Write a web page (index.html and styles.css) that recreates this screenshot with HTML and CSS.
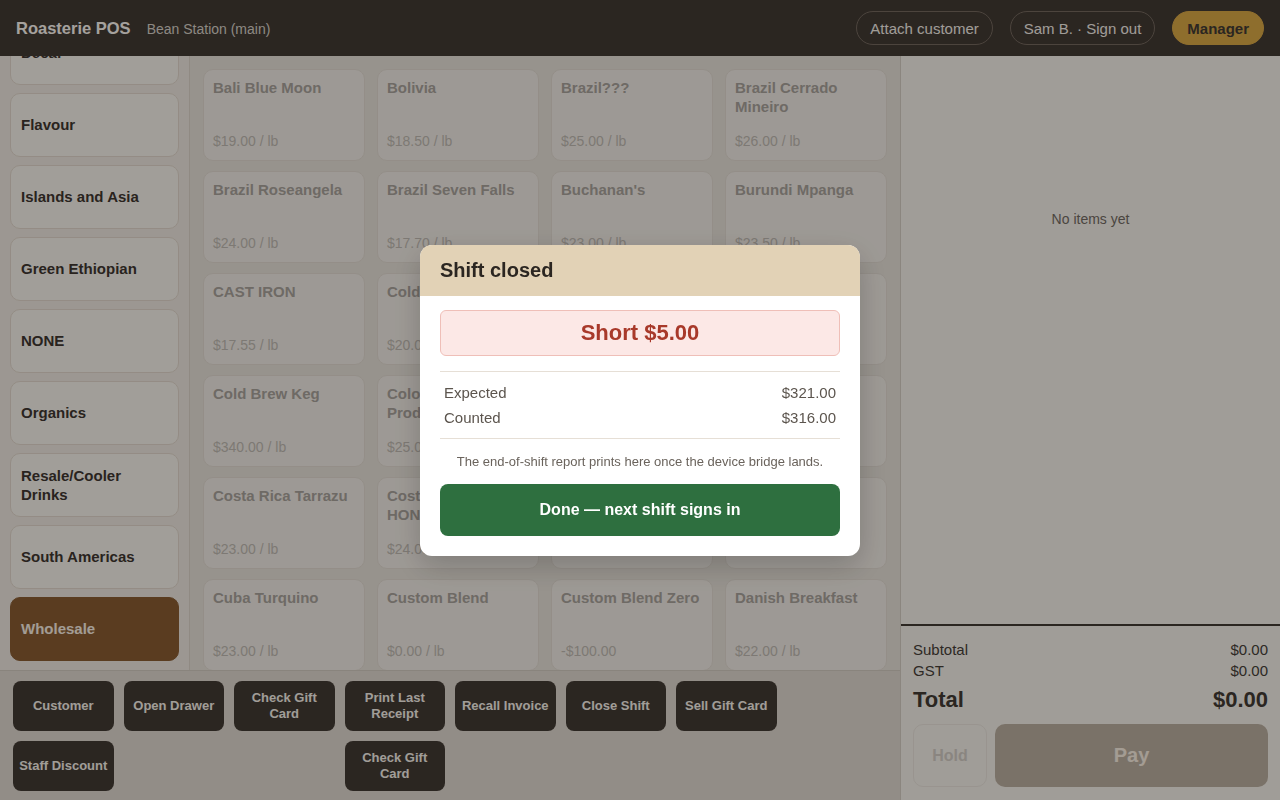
FILE: index.html
```html
<!DOCTYPE html>
<html lang="en">
<head>
    <meta charset="UTF-8">
    <meta name="viewport" content="width=device-width, initial-scale=1.0">
    <title>Roasterie POS - Bean Station</title>
    <link rel="stylesheet" href="styles.css">
</head>
<body>
    <header class="topbar">
        <div class="brand">
            <span class="brand-name">Roasterie POS</span>
            <span class="brand-station">Bean Station (main)</span>
        </div>
        <div class="topbar-actions">
            <button class="pill">Attach customer</button>
            <button class="pill">Sam B. · Sign out</button>
            <button class="pill pill-manager">Manager</button>
        </div>
    </header>

    <div class="main">
        <div class="left">
            <div class="browse">
                <nav class="categories" id="categories">
                    <button class="cat">All Coffee</button>
                    <button class="cat">Blends</button>
                    <button class="cat">Decaf</button>
                    <button class="cat">Flavour</button>
                    <button class="cat">Islands and Asia</button>
                    <button class="cat">Green Ethiopian</button>
                    <button class="cat">NONE</button>
                    <button class="cat">Organics</button>
                    <button class="cat">Resale/Cooler Drinks</button>
                    <button class="cat">South Americas</button>
                    <button class="cat cat-active">Wholesale</button>
                </nav>

                <div class="products">
                    <div class="product"><span class="p-name">Bali Blue Moon</span><span class="p-price">$19.00 / lb</span></div>
                    <div class="product"><span class="p-name">Bolivia</span><span class="p-price">$18.50 / lb</span></div>
                    <div class="product"><span class="p-name">Brazil???</span><span class="p-price">$25.00 / lb</span></div>
                    <div class="product"><span class="p-name">Brazil Cerrado Mineiro</span><span class="p-price">$26.00 / lb</span></div>

                    <div class="product"><span class="p-name">Brazil Roseangela</span><span class="p-price">$24.00 / lb</span></div>
                    <div class="product"><span class="p-name">Brazil Seven Falls</span><span class="p-price">$17.70 / lb</span></div>
                    <div class="product"><span class="p-name">Buchanan's</span><span class="p-price">$23.00 / lb</span></div>
                    <div class="product"><span class="p-name">Burundi Mpanga</span><span class="p-price">$23.50 / lb</span></div>

                    <div class="product"><span class="p-name">CAST IRON</span><span class="p-price">$17.55 / lb</span></div>
                    <div class="product"><span class="p-name">Cold Brew Blend</span><span class="p-price">$20.00 / lb</span></div>
                    <div class="product"><span class="p-name">Cold Brew Concentrate</span><span class="p-price">$18.00 / lb</span></div>
                    <div class="product"><span class="p-name">Colombia Huila</span><span class="p-price">$22.50 / lb</span></div>

                    <div class="product"><span class="p-name">Cold Brew Keg</span><span class="p-price">$340.00 / lb</span></div>
                    <div class="product"><span class="p-name">Colombia Women-Produced</span><span class="p-price">$25.00 / lb</span></div>
                    <div class="product"><span class="p-name">Colombia Supremo</span><span class="p-price">$21.00 / lb</span></div>
                    <div class="product"><span class="p-name">Congo Kivu</span><span class="p-price">$24.50 / lb</span></div>

                    <div class="product"><span class="p-name">Costa Rica Tarrazu</span><span class="p-price">$23.00 / lb</span></div>
                    <div class="product"><span class="p-name">Costa Rica Tarrazu HONEY</span><span class="p-price">$24.00 / lb</span></div>
                    <div class="product"><span class="p-name">Cuba Serrano</span><span class="p-price">$26.50 / lb</span></div>
                    <div class="product"><span class="p-name">Cuba Cristalmontana</span><span class="p-price">$27.00 / lb</span></div>

                    <div class="product"><span class="p-name">Cuba Turquino</span><span class="p-price">$23.00 / lb</span></div>
                    <div class="product"><span class="p-name">Custom Blend</span><span class="p-price">$0.00 / lb</span></div>
                    <div class="product"><span class="p-name">Custom Blend Zero</span><span class="p-price">-$100.00</span></div>
                    <div class="product"><span class="p-name">Danish Breakfast</span><span class="p-price">$22.00 / lb</span></div>
                </div>
            </div>

            <div class="toolbar">
                <button class="tool">Customer</button>
                <button class="tool">Open Drawer</button>
                <button class="tool">Check Gift Card</button>
                <button class="tool">Print Last Receipt</button>
                <button class="tool">Recall Invoice</button>
                <button class="tool">Close Shift</button>
                <button class="tool">Sell Gift Card</button>
                <button class="tool">Staff Discount</button>
                <button class="tool tool-col4">Check Gift Card</button>
            </div>
        </div>

        <aside class="cart">
            <div class="cart-items">
                <p class="cart-empty">No items yet</p>
            </div>
            <div class="cart-totals">
                <div class="line"><span>Subtotal</span><span>$0.00</span></div>
                <div class="line"><span>GST</span><span>$0.00</span></div>
                <div class="line line-total"><span>Total</span><span>$0.00</span></div>
                <div class="cart-buttons">
                    <button class="btn-hold" disabled>Hold</button>
                    <button class="btn-pay" disabled>Pay</button>
                </div>
            </div>
        </aside>
    </div>

    <!-- shift closed dialog -->
    <div class="backdrop">
        <div class="dialog">
            <div class="dialog-header">Shift closed</div>
            <div class="dialog-body">
                <div class="variance">Short $5.00</div>
                <div class="summary">
                    <div class="summary-row"><span>Expected</span><span>$321.00</span></div>
                    <div class="summary-row"><span>Counted</span><span>$316.00</span></div>
                </div>
                <p class="dialog-note">The end-of-shift report prints here once the device bridge lands.</p>
                <button class="btn-done">Done — next shift signs in</button>
            </div>
        </div>
    </div>

    <script>
        var cats = document.getElementById("categories");
        cats.scrollTop = cats.scrollHeight;
    </script>
</body>
</html>
```

FILE: styles.css
```css
* {
    box-sizing: border-box;
}

body {
    margin: 0;
    padding: 0;
    font-family: "Liberation Sans", Arial, sans-serif;
    background-color: #f6f2ea;
    color: #2b2621;
    height: 800px;
    overflow: hidden;
}

button {
    font-family: inherit;
    cursor: pointer;
}

/* top bar */
.topbar {
    height: 56px;
    background-color: #433b34;
    display: flex;
    align-items: center;
    justify-content: space-between;
    padding: 0 16px;
}

.brand {
    display: flex;
    align-items: baseline;
    gap: 16px;
}

.brand-name {
    color: #fdf8f2;
    font-weight: bold;
    font-size: 16.5px;
}

.brand-station {
    color: #d9d2c9;
    font-size: 14px;
}

.topbar-actions {
    display: flex;
    gap: 17px;
}

.pill {
    height: 34px;
    padding: 0 13px;
    border: 1px solid #75695e;
    border-radius: 17px;
    background: transparent;
    color: #f6f0e9;
    font-size: 15px;
}

.pill-manager {
    padding: 0 14px;
    background-color: #dba946;
    border-color: #dba946;
    color: #433b34;
    font-weight: bold;
}

/* main layout */
.main {
    display: flex;
    height: 744px;
}

.left {
    width: 900px;
    display: flex;
    flex-direction: column;
}

.browse {
    flex: 1;
    display: flex;
    min-height: 0;
}

.categories {
    width: 190px;
    flex-shrink: 0;
    background-color: #f0e9e1;
    border-right: 1px solid #ddd4ca;
    padding: 10px 10px 9px;
    display: flex;
    flex-direction: column;
    gap: 8px;
    overflow-y: auto;
    scrollbar-width: none;
}

.cat {
    flex-shrink: 0;
    height: 64px;
    text-align: left;
    padding: 0 10px 1px;
    background-color: #f7f3ec;
    border: 1px solid #e4d8cc;
    border-radius: 10px;
    color: #3f3730;
    font-size: 15px;
    font-weight: bold;
    line-height: 19px;
}

.cat-active {
    background-color: #8b5d32;
    border-color: #8b5d32;
    color: #faf0e4;
}

.products {
    flex: 1;
    background-color: #e8e2d9;
    padding: 13px 13px;
    display: grid;
    grid-template-columns: repeat(4, 162px);
    grid-auto-rows: 92px;
    column-gap: 12px;
    row-gap: 10px;
    overflow: hidden;
}

.product {
    background-color: #f2ece5;
    border: 1px solid #e3dbd2;
    border-radius: 10px;
    padding: 8px 9px 11px;
    display: flex;
    flex-direction: column;
    justify-content: space-between;
}

.p-name {
    color: #aaa39c;
    font-weight: bold;
    font-size: 15px;
    line-height: 19px;
}

.p-price {
    color: #c1bab2;
    font-size: 14px;
}

/* action toolbar */
.toolbar {
    height: 130px;
    flex-shrink: 0;
    background-color: #e1d9d0;
    border-top: 1px solid #d3cbc1;
    padding: 10px 13px;
    display: grid;
    grid-template-columns: repeat(7, 100.5px);
    grid-auto-rows: 50px;
    column-gap: 10px;
    row-gap: 10px;
}

.tool {
    background-color: #433b34;
    border: none;
    border-radius: 8px;
    color: #f8f2ea;
    font-size: 13px;
    font-weight: bold;
    line-height: 16px;
    padding: 0 6px;
}

.tool-col4 {
    grid-column: 4;
}

/* cart */
.cart {
    width: 380px;
    background-color: #f6f2ea;
    border-left: 1px solid #d6cec4;
    display: flex;
    flex-direction: column;
}

.cart-items {
    flex: 1;
    padding-top: 155px;
    text-align: center;
}

.cart-empty {
    margin: 0;
    font-size: 14px;
    color: #736b63;
}

.cart-totals {
    border-top: 2px solid #433b34;
    padding: 13px 12px 13px;
}

.line {
    display: flex;
    justify-content: space-between;
    font-size: 15px;
    line-height: 21px;
    color: #473f38;
}

.line-total {
    font-size: 22px;
    font-weight: bold;
    line-height: 30px;
    margin-top: 4px;
    color: #433b34;
}

.cart-buttons {
    display: flex;
    gap: 8px;
    margin-top: 9px;
}

.btn-hold {
    width: 74px;
    height: 63px;
    background: transparent;
    border: 1px solid #ebe4dc;
    border-radius: 10px;
    color: #d4cdc5;
    font-size: 16px;
    font-weight: bold;
}

.btn-pay {
    flex: 1;
    height: 63px;
    background-color: #bcafa0;
    border: none;
    border-radius: 10px;
    color: #fbf0e2;
    font-size: 20px;
    font-weight: bold;
}

/* shift closed dialog */
.backdrop {
    position: fixed;
    top: 0;
    left: 0;
    right: 0;
    bottom: 0;
    background-color: rgba(0, 0, 0, 0.35);
    display: flex;
    align-items: center;
    justify-content: center;
    z-index: 1000;
}

.dialog {
    width: 440px;
    background-color: #fff;
    border-radius: 12px;
    overflow: hidden;
    box-shadow: 0 10px 30px rgba(0, 0, 0, 0.2);
}

.dialog-header {
    background-color: #e2d2b6;
    height: 51px;
    display: flex;
    align-items: center;
    padding: 0 20px;
    font-size: 20px;
    font-weight: bold;
    color: #2b2621;
}

.dialog-body {
    padding: 14px 20px 20px;
}

.variance {
    height: 46px;
    background-color: #fce8e6;
    border: 1px solid #efbfb8;
    border-radius: 6px;
    display: flex;
    align-items: center;
    justify-content: center;
    font-size: 22px;
    font-weight: bold;
    color: #a8392a;
}

.summary {
    margin-top: 15px;
    border-top: 1px solid #e6dfd6;
    border-bottom: 1px solid #e6dfd6;
    padding: 8px 4px 8px;
}

.summary-row {
    display: flex;
    justify-content: space-between;
    font-size: 15px;
    line-height: 25px;
    color: #5c554e;
}

.dialog-note {
    margin: 14px 0 13px;
    text-align: center;
    font-size: 13px;
    line-height: 18px;
    color: #6a635c;
}

.btn-done {
    width: 100%;
    height: 52px;
    background-color: #2e6f3f;
    border: none;
    border-radius: 8px;
    color: #fff;
    font-size: 16px;
    font-weight: bold;
}
```
